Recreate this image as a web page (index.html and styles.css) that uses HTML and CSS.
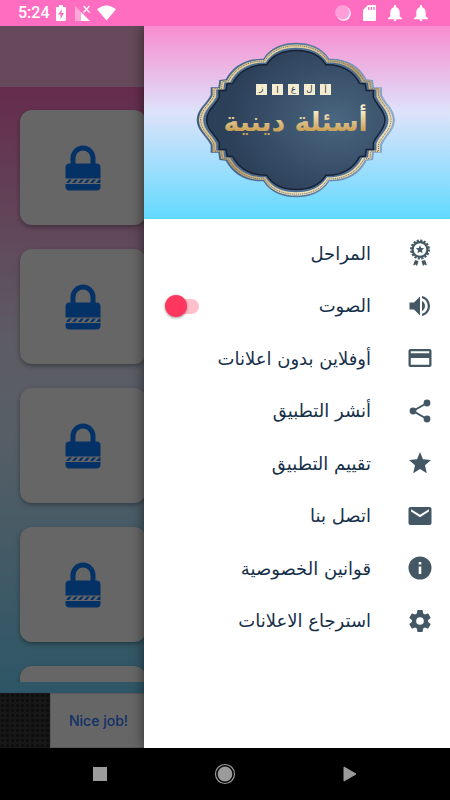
FILE: index.html
```html
<!DOCTYPE html>
<html lang="ar" dir="rtl">
<head>
<meta charset="utf-8">
<meta name="viewport" content="width=device-width, initial-scale=1">
<title>أسئلة دينية</title>
<link rel="stylesheet" href="styles.css">
</head>
<body>
<svg class="defs" width="0" height="0" aria-hidden="true">
  <defs>
    <symbol id="lock" viewBox="0 0 36 46">
      <path d="M8 20V13a10 10 0 0 1 20 0v7" fill="none" stroke="currentColor" stroke-width="5"/>
      <path d="M4.500 18.500h27q4 0 4 4v11H.5v-11q0-4 4-4zM.5 39h35v2.500q0 4-4 4h-27q-4 0-4-4z" fill="currentColor"/>
      <path d="M1 38l3-3.500h3L4 38zM7 38l3-3.500h3L10 38zM13 38l3-3.500h3L16 38zM19 38l3-3.500h3L22 38zM25 38l3-3.500h3L28 38zM31 38l3-3.500h1.500V38z" fill="currentColor"/>
    </symbol>
    <symbol id="bell" viewBox="0 0 24 24">
      <path fill="currentColor" d="M12 24c1.300 0 2.300-1 2.300-2.300H9.700C9.700 23 10.700 24 12 24zm7-7v-6c0-3.900-2-6.900-5.200-7.700V1.800a1.800 1.800 0 0 0-3.600 0v1.500C7 4.100 5 7.100 5 11v6l-3.500 3v1.500h21V20z"/>
    </symbol>
    <path id="frame" d="M20 270C22 236 44 228 62 195V172H85L88 150L107 148C128 108 168 84 220 86C242 50 280 38 319 38C358 38 396 50 418 86C470 84 510 108 530 148L549 150L552 172H576V195C592 228 613 236 615 270C613 304 592 312 576 345V368H552L549 390L530 392C510 432 470 456 418 454C396 490 358 502 319 502C280 502 242 490 220 454C168 456 128 432 107 392L88 390L85 368H62V345C44 312 22 304 20 270Z"/>
    <linearGradient id="gold" x1="0" y1="0" x2="1" y2="1">
      <stop offset="0" stop-color="#d2b071"/><stop offset=".25" stop-color="#e8d3a0"/><stop offset=".5" stop-color="#b99a62"/><stop offset=".75" stop-color="#f0e3bd"/><stop offset="1" stop-color="#c9a767"/>
    </linearGradient>
    <linearGradient id="letters" x1="0" y1="0" x2="0" y2="1">
      <stop offset=".2" stop-color="#f6edc9"/><stop offset=".8" stop-color="#cba258"/>
    </linearGradient>
    <linearGradient id="rim" x1="0" y1="0" x2="1" y2="0">
      <stop offset="0" stop-color="#426187"/><stop offset=".55" stop-color="#57779f"/><stop offset="1" stop-color="#8facd0"/>
    </linearGradient>
    <radialGradient id="plate" cx=".72" cy=".5" r=".6">
      <stop offset="0" stop-color="#4a6680"/><stop offset="1" stop-color="#2d405a"/>
    </radialGradient>
  </defs>
</svg>

<div class="phone">
  <header class="status" dir="ltr">
    <span class="time">5:24</span>
    <svg class="s-batt" viewBox="0 0 10 16"><path fill="#fff" fill-rule="evenodd" d="M3 0h4v2h2q1 0 1 1v12q0 1-1 1H1q-1 0-1-1V3q0-1 1-1h2zM6 4L2 9.500h2.500V14L8 8H5.500z"/></svg>
    <svg class="s-sig" viewBox="0 0 16 16"><path fill="#fff" fill-opacity=".4" d="M0 1l6 6v9H0z"/><path fill="#fff" d="M6 7l9 9H6z"/><path d="M8.500 1l6 6.500m0-6.500l-6 6.500" stroke="#fff" stroke-width="1.200"/></svg>
    <svg class="s-wifi" viewBox="0 0 20 16"><path fill="#fff" d="M0 4Q10-4 20 4L10 16z"/></svg>
    <span class="spacer"></span>
    <svg class="s-note" viewBox="0 0 16 16"><circle cx="8.500" cy="8.500" r="7.300" fill="#fff"/><circle cx="7.500" cy="7.500" r="7" fill="#ff9dd8" stroke="#ffb9e3" stroke-width="1" stroke-dasharray="1 1"/></svg>
    <svg class="s-note" viewBox="0 0 16 16"><path fill="#fff" fill-rule="evenodd" d="M7 0h7q1 0 1 1v14q0 1-1 1H3q-1 0-1-1V5zM7 2v3h1.300V2zm2.700 0v3H11V2zm2.600 0v3h1.300V2z"/></svg>
    <svg class="s-note"><use href="#bell"/></svg>
    <svg class="s-note"><use href="#bell"/></svg>
  </header>

  <main class="stage">
    <div class="page">
      <div class="appbar"></div>
      <div class="levels">
        <div class="card"><svg class="lock"><use href="#lock"/></svg></div>
        <div class="card"><svg class="lock"><use href="#lock"/></svg></div>
        <div class="card"><svg class="lock"><use href="#lock"/></svg></div>
        <div class="card"><svg class="lock"><use href="#lock"/></svg></div>
        <div class="card"></div>
      </div>
      <div class="ad" dir="ltr"><div class="ad-art"></div><div class="ad-text">Nice job!</div></div>
    </div>

    <aside class="drawer">
      <div class="hero">
        <svg class="logo" viewBox="0 0 645 540" role="img" aria-label="ألغاز أسئلة دينية">
          <use href="#frame" fill="url(#rim)"/>
          <use href="#frame" fill="url(#gold)" transform="translate(318 270) scale(.977) translate(-318 -270)"/>
          <use href="#frame" fill="none" stroke="#5d6673" stroke-width="3" stroke-dasharray="3 3" transform="translate(318 270) scale(.96) translate(-318 -270)"/>
          <use href="#frame" fill="#4d6e94" transform="translate(318 270) scale(.935) translate(-318 -270)"/>
          <use href="#frame" fill="url(#plate)" stroke="#172334" stroke-width="5" transform="translate(318 270) scale(.9) translate(-318 -270)"/>
          <path fill="#f4edcf" d="M198 162h33v33h-33zM246 162h33v33h-33zM294 162h33v33h-33zM342 162h33v33h-33zM390 162h33v33h-33z"/>
          <g class="tile">
            <text x="406" y="189">أ</text><text x="358" y="187">ل</text><text x="310" y="185">غ</text><text x="262" y="188">ا</text><text x="214" y="184">ز</text>
          </g>
          <text class="title" x="317" y="303" fill="url(#letters)">أسئلة دينية</text>
        </svg>
      </div>
      <nav>
        <ul class="menu">
          <li><a href="#levels"><svg viewBox="0 0 24 24"><circle cx="12" cy="8.500" r="8.900" fill="none" stroke="currentColor" stroke-width="2.200" stroke-dasharray="2.100 1.395"/><circle cx="12" cy="8.500" r="7.400" fill="none" stroke="currentColor" stroke-width="2.200"/><path fill="currentColor" d="M12 4.300l1.200 2.700 3 .3-2.300 2 .7 2.900-2.600-1.500-2.600 1.500.7-2.900-2.300-2 3-.3zM7 19l3.500 1-1.500 5-1.500-1.500L5 24.500zM17 19l-3.500 1 1.500 5 1.500-1.500 2.500 1z"/></svg><span>المراحل</span></a></li>
          <li><svg viewBox="0 0 24 24"><path fill="currentColor" d="M1.500 8.500v7H6l6 6v-19l-6 6zM14 7v10c1.800-.9 3-2.700 3-5s-1.200-4.100-3-5zm0-5v2.200c3.400.9 5.700 4 5.700 7.800s-2.300 6.900-5.700 7.800V22c4.700-.9 8-5.100 8-10s-3.300-9.100-8-10z"/></svg><label for="sound">الصوت</label><input class="switch" type="checkbox" id="sound" checked></li>
          <li><a href="#offline"><svg viewBox="0 0 24 24"><path fill="currentColor" d="M21.500 3h-19C1.300 3 .5 3.900.5 5v14c0 1.100.8 2 2 2h19c1.200 0 2-.9 2-2V5c0-1.100-.8-2-2-2zm-.3 15.700H2.800V12h18.400zm0-11.400H2.800V5.200h18.400z"/></svg><span>أوفلاين بدون اعلانات</span></a></li>
          <li><a href="#share"><svg viewBox="0 0 24 24"><path fill="none" stroke="currentColor" stroke-width="2" d="M19 4L5 12l14 8"/><g fill="currentColor"><circle cx="19" cy="4" r="3.400"/><circle cx="5" cy="12" r="3.400"/><circle cx="19" cy="20" r="3.400"/></g></svg><span>أنشر التطبيق</span></a></li>
          <li><a href="#rate"><svg viewBox="0 0 24 24"><path fill="currentColor" d="M12 17.900l6.800 4.300-1.800-8 6-5.300-8-.7L12 1 9 8.200l-8 .7 6 5.300-1.800 8z"/></svg><span>تقييم التطبيق</span></a></li>
          <li><a href="#contact"><svg viewBox="0 0 24 24"><path fill="currentColor" d="M21.500 3h-19c-1.200 0-2 .9-2 2v14c0 1.100.8 2 2 2h19c1.200 0 2-.9 2-2V5c0-1.100-.8-2-2-2zm-.6 4.500L12 13.200 3.100 7.500V5.200l8.900 5.600 8.900-5.600z"/></svg><span>اتصل بنا</span></a></li>
          <li><a href="#privacy"><svg viewBox="0 0 24 24"><path fill="currentColor" fill-rule="evenodd" d="M12 .5a11.500 11.500 0 1 0 0 23 11.500 11.500 0 0 0 0-23zm1.300 17.500h-2.600v-7.500h2.600zm0-9.500h-2.600V6h2.600z"/></svg><span>قوانين الخصوصية</span></a></li>
          <li><a href="#restore"><svg viewBox="1 1 22 22"><path fill="currentColor" d="M19.430 12.980c.04-.32.07-.64.07-.98s-.03-.66-.07-.98l2.110-1.650c.19-.15.24-.42.12-.64l-2-3.460c-.12-.22-.39-.3-.61-.22l-2.490 1c-.52-.4-1.080-.73-1.690-.98l-.38-2.650C14.460 2.180 14.250 2 14 2h-4c-.25 0-.46.18-.49.42l-.38 2.650c-.61.25-1.170.59-1.690.98l-2.490-1c-.23-.09-.49 0-.61.22l-2 3.460c-.13.22-.07.49.12.64l2.110 1.650c-.04.32-.07.65-.07.98s.03.66.07.98l-2.110 1.650c-.19.15-.24.42-.12.64l2 3.460c.12.22.39.3.61.22l2.490-1c.52.4 1.080.73 1.690.98l.38 2.650c.03.24.24.42.49.42h4c.25 0 .46-.18.49-.42l.38-2.650c.61-.25 1.170-.59 1.690-.98l2.490 1c.23.09.49 0 .61-.22l2-3.460c.12-.22.07-.49-.12-.64zM12 15.500a3.500 3.500 0 1 1 0-7 3.500 3.500 0 0 1 0 7z"/></svg><span>استرجاع الاعلانات</span></a></li>
        </ul>
      </nav>
    </aside>
  </main>

  <footer class="keys" dir="ltr">
    <button type="button" aria-label="Recents"><svg viewBox="0 0 22 22"><path fill="#9b9b9b" d="M4 4h14v14H4z"/></svg></button>
    <button type="button" aria-label="Home"><svg viewBox="0 0 22 22"><circle cx="11" cy="11" r="9.500" fill="none" stroke="#9b9b9b" stroke-width="1.200"/><circle cx="11" cy="11" r="7.400" fill="#9b9b9b"/></svg></button>
    <button type="button" aria-label="Back"><svg viewBox="0 0 22 22"><path fill="#9b9b9b" stroke="#9b9b9b" stroke-linejoin="round" d="M5 4v14l12-7z"/></svg></button>
  </footer>
</div>
</body>
</html>
```
FILE: styles.css
```css
* { box-sizing: border-box; }

body {
  margin: 0;
  font-family: "DejaVu Sans", sans-serif;
}

.defs { position: absolute; }

.phone {
  display: flex;
  flex-direction: column;
  min-height: 100vh;
}

.status {
  display: flex;
  align-items: center;
  height: 26px;
  padding: 0 21px 0 18px;
  background: #ff6dc0;
  color: #fff;
}

.time {
  margin-right: 6px;
  font: 500 16px/26px Roboto, sans-serif;
}

.s-batt { width: 10px; height: 16px; }
.s-sig { width: 16px; height: 16px; margin-left: 9px; }
.s-wifi { width: 19px; height: 16px; margin-left: 6px; }
.s-note { width: 16px; height: 16px; margin-left: 10px; }
.spacer { flex: 1; }

.stage {
  position: relative;
  display: flex;
  flex: 1;
  background: linear-gradient(#ff6dc0 8%, #e8e4fa 43%, #dcecff 55%, #73d8ff 92%);
}

.page {
  display: flex;
  flex: 1;
  flex-direction: column;
}

.appbar {
  height: 61px;
  background: rgba(255, 255, 255, .5);
}

.levels {
  display: grid;
  flex: 1 1 0;
  grid-auto-rows: 115px;
  gap: 24px;
  width: 28%;
  min-height: 0;
  margin: 0 0 11px;
  padding-top: 23px;
  align-self: flex-end;
  box-sizing: content-box;
  padding-left: 20px;
  overflow: hidden;
  direction: ltr;
}

.card {
  display: grid;
  place-items: center;
  border-radius: 12px;
  background: #fff;
  box-shadow: 0 2px 5px rgba(0, 0, 0, .35);
}

.lock {
  width: 36px;
  height: 46px;
  color: #0a7bff;
}

.ad {
  display: flex;
  height: 55px;
}

.ad-art {
  width: 50px;
  background: radial-gradient(circle, #222 1px, #3b3b3b 2px) 0 0 / 5px 5px;
}

.ad-text {
  flex: 1;
  padding-left: 18px;
  border: 1px solid #ddd;
  background: #fff;
  color: #2e7bff;
  font: 500 14px/53px Inter, sans-serif;
}

.stage::before {
  content: "";
  position: absolute;
  inset: 0;
  background: rgba(0, 0, 0, .6);
}

.drawer {
  position: absolute;
  top: 0;
  right: 0;
  bottom: 0;
  width: 68%;
  background: #fff;
  box-shadow: 0 0 12px rgba(0, 0, 0, .55);
  clip-path: inset(0 0 0 -16px);
}

.hero {
  display: flex;
  justify-content: center;
  align-items: flex-start;
  height: 193px;
  padding-top: 4px;
  background: linear-gradient(#f98cd0, #dde3fa 45%, #62d9ff);
}

.logo {
  width: 215px;
  height: 180px;
}

.title {
  font: bold 80px "DejaVu Sans", sans-serif;
  text-anchor: middle;
}

.tile {
  fill: #2b3a50;
  font: 26px "DejaVu Sans", sans-serif;
  text-anchor: middle;
}

.menu {
  display: grid;
  grid-auto-rows: 1fr;
  height: 420px;
  margin: 8px 0 0;
  padding: 0;
  list-style: none;
}

.menu li,
.menu a {
  display: flex;
  align-items: center;
}

.menu li {
  padding: 0 18px 0 21px;
  color: #17304a;
  font-size: 18px;
}

.menu a {
  color: inherit;
  text-decoration: none;
}

.menu svg {
  flex: none;
  width: 24px;
  height: 24px;
  margin-left: 37px;
  overflow: visible;
  color: #435864;
}

.switch {
  position: relative;
  width: 34px;
  height: 22px;
  margin: 0 auto 0 0;
  appearance: none;
}

.switch::before {
  content: "";
  position: absolute;
  inset: 4px 0 3px 6px;
  border-radius: 8px;
  background: #ffbfcb;
}

.switch::after {
  content: "";
  position: absolute;
  left: 0;
  top: 0;
  width: 22px;
  height: 22px;
  border-radius: 50%;
  background: #ff375e;
  box-shadow: 0 1px 3px rgba(0, 0, 0, .4);
}

.keys {
  display: grid;
  grid-template-columns: repeat(3, 1fr);
  height: 52px;
  padding: 0 38px;
  background: #000;
}

.keys button {
  display: grid;
  place-items: center;
  padding: 0;
  border: 0;
  background: none;
}

.keys svg { width: 22px; height: 22px; }
```
